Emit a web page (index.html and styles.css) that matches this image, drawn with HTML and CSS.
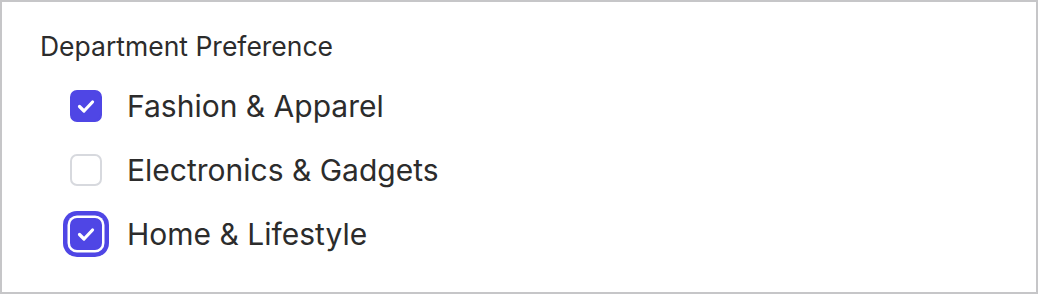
FILE: index.html
```html
<!DOCTYPE html>
<html>
<head>
<meta charset="utf-8">
<link rel="stylesheet" href="styles.css">
</head>
<body>
<div class="frame">
  <fieldset class="group">
    <legend class="legend">Department Preference</legend>
    <label class="option">
      <span class="box checked">
        <svg viewBox="0 0 32 32" class="check"><path d="M9.5 16.5l4.5 4.5l8.5-9"/></svg>
      </span>
      <span class="text">Fashion &amp; Apparel</span>
    </label>
    <label class="option">
      <span class="box"></span>
      <span class="text">Electronics &amp; Gadgets</span>
    </label>
    <label class="option">
      <span class="box checked focused">
        <svg viewBox="0 0 32 32" class="check"><path d="M9.5 16.5l4.5 4.5l8.5-9"/></svg>
      </span>
      <span class="text">Home &amp; Lifestyle</span>
    </label>
  </fieldset>
</div>
</body>
</html>
```

FILE: styles.css
```css
html, body {
  margin: 0;
  padding: 0;
  background: #fff;
}
.frame {
  box-sizing: border-box;
  width: 1038px;
  height: 294px;
  border: 2px solid #c6c6c8;
  padding: 28px 38px 0;
  font-family: Inter, "Liberation Sans", sans-serif;
  color: #2c2c2c;
}
.group {
  border: 0;
  margin: 0;
  padding: 0;
  display: flex;
  flex-direction: column;
}
.legend {
  padding: 0;
  font-size: 26.5px;
  line-height: 32px;
  margin-bottom: 12px;
}
.option {
  display: flex;
  align-items: center;
  gap: 25px;
  height: 64px;
  padding-left: 30px;
}
.box {
  box-sizing: border-box;
  width: 32px;
  height: 32px;
  border-radius: 7px;
  border: 2px solid #d7d9de;
  background: #fff;
  display: flex;
  align-items: center;
  justify-content: center;
  flex: none;
}
.box.checked {
  background: #4f46e5;
  border-color: #4f46e5;
}
.box.focused {
  box-shadow: 0 0 0 2.5px #fff, 0 0 0 7px #4f46e5;
}
.check {
  width: 32px;
  height: 32px;
  margin: -2px;
  fill: none;
  stroke: #fff;
  stroke-width: 3.2;
  stroke-linecap: round;
  stroke-linejoin: round;
}
.text {
  font-size: 30px;
  line-height: 40px;
}
```
